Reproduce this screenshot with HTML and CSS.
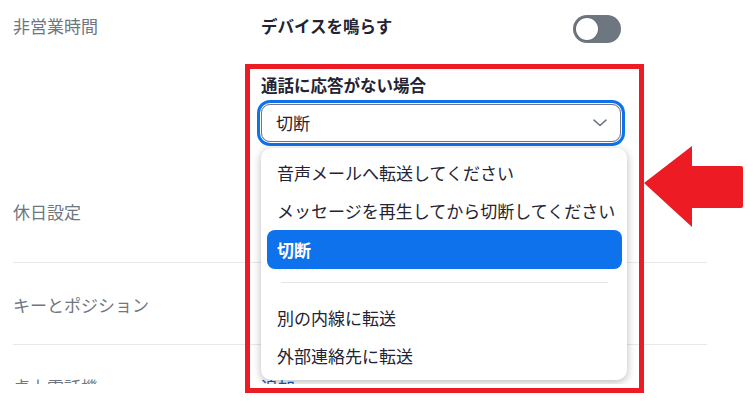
FILE: index.html
```html
<!DOCTYPE html>
<html lang="ja">
<head>
<meta charset="utf-8">
<link rel="stylesheet" href="styles.css">
</head>
<body>
<div class="stage">
  <div class="viewport">
    <div class="settings">
      <div class="row row-first">
        <div class="label">非営業時間</div>
        <div class="content">
          <div class="line-head">
            <span class="title">デバイスを鳴らす</span>
            <span class="toggle"><span class="knob"></span></span>
          </div>
          <div class="title title-sub">通話に応答がない場合</div>
          <div class="select-wrap">
            <div class="select">
              <span>切断</span>
              <svg class="chev" width="14" height="8" viewBox="0 0 14 8"><path d="M1 1.2 L7 6.5 L13 1.2" fill="none" stroke="#6e7680" stroke-width="1.6" stroke-linecap="round" stroke-linejoin="round"/></svg>
            </div>
            <div class="menu">
              <div class="opt">音声メールへ転送してください</div>
              <div class="opt">メッセージを再生してから切断してください</div>
              <div class="opt opt-active">切断</div>
              <div class="sep"></div>
              <div class="opt">別の内線に転送</div>
              <div class="opt">外部連絡先に転送</div>
            </div>
          </div>
        </div>
      </div>
      <div class="row row-tall">
        <div class="label">休日設定</div>
        <div class="content"></div>
      </div>
      <div class="row">
        <div class="label">キーとポジション</div>
        <div class="content"></div>
      </div>
      <div class="row">
        <div class="label">卓上電話機</div>
        <div class="content"><span class="link">追加</span></div>
      </div>
    </div>
  </div>
  <div class="highlight-box"></div>
  <svg class="arrow" width="100" height="82" viewBox="0 0 100 82"><path d="M0 37 L48 0 L48 20 L97 20 Q99 20 99 22 L99 60 Q99 62 97 62 L48 62 L48 81 Z" fill="#ed1c24"/></svg>
</div>
</body>
</html>
```

FILE: styles.css
```css
html, body {
  margin: 0;
  padding: 0;
  background: #ffffff;
}
body {
  font-family: "Noto Sans CJK JP", "Noto Sans", sans-serif;
  color: #232333;
  width: 754px;
  height: 420px;
  overflow: hidden;
}
.stage {
  position: relative;
  width: 754px;
  height: 420px;
}
.viewport {
  height: 384px;
  overflow: hidden;
}
.settings {
  margin-left: 13px;
  width: 694px;
}
.row {
  display: grid;
  grid-template-columns: 248px 1fr;
  padding: 30px 0 27px;
  border-bottom: 1px solid #e8e8ef;
  font-size: 17px;
  line-height: 24px;
}
.row-first {
  padding: 14px 0 28px;
  border-bottom: none;
}
.row-tall {
  padding-bottom: 38px;
}
.label {
  color: #6e7680;
}
.content {
  width: 360px;
}
.line-head {
  display: flex;
  justify-content: space-between;
  align-items: flex-start;
  height: 24px;
}
.title {
  font-weight: 700;
  font-size: 16.5px;
  color: #232333;
}
.title-sub {
  display: block;
  margin-top: 35px;
}
.toggle {
  width: 48px;
  height: 28px;
  margin-top: 1px;
  border-radius: 14px;
  background: #6e7680;
  display: flex;
  align-items: center;
  padding-left: 3px;
  box-sizing: border-box;
  flex: none;
}
.knob {
  width: 22px;
  height: 22px;
  border-radius: 50%;
  background: #ffffff;
  box-shadow: 0 0 0 1px rgba(0,0,0,0.08);
}
.select-wrap {
  position: relative;
  margin-top: 7px;
}
.select {
  height: 38px;
  box-sizing: border-box;
  border: 1px solid #747487;
  border-radius: 9px;
  box-shadow: 0 0 0 1px #ffffff, 0 0 0 4px #0e72ed;
  display: flex;
  align-items: center;
  justify-content: space-between;
  padding: 0 13px 0 14px;
  font-size: 17px;
  color: #232333;
}
.chev {
  display: block;
}
.menu {
  position: absolute;
  top: 44px;
  left: 0;
  right: -6px;
  background: #ffffff;
  border-radius: 10px;
  box-shadow: 0 2px 8px rgba(0,0,0,0.28);
  padding: 6px 5px 5px 6px;
  z-index: 2;
}
.opt {
  height: 38px;
  display: flex;
  align-items: center;
  padding-left: 10px;
  border-radius: 8px;
  font-size: 17px;
  color: #232333;
  white-space: nowrap;
}
.opt-active {
  background: #0e72ed;
  color: #ffffff;
  font-weight: 700;
  height: 39px;
  margin-bottom: -1px;
}
.sep {
  height: 1px;
  background: #e3e3ea;
  margin: 14px 14px 16px;
}
.link {
  color: #0e5cc4;
}
.highlight-box {
  position: absolute;
  left: 245px;
  top: 64px;
  width: 399px;
  height: 329px;
  box-sizing: border-box;
  border: 5px solid #ed1c24;
  pointer-events: none;
}
.arrow {
  position: absolute;
  left: 644px;
  top: 146px;
}
```
